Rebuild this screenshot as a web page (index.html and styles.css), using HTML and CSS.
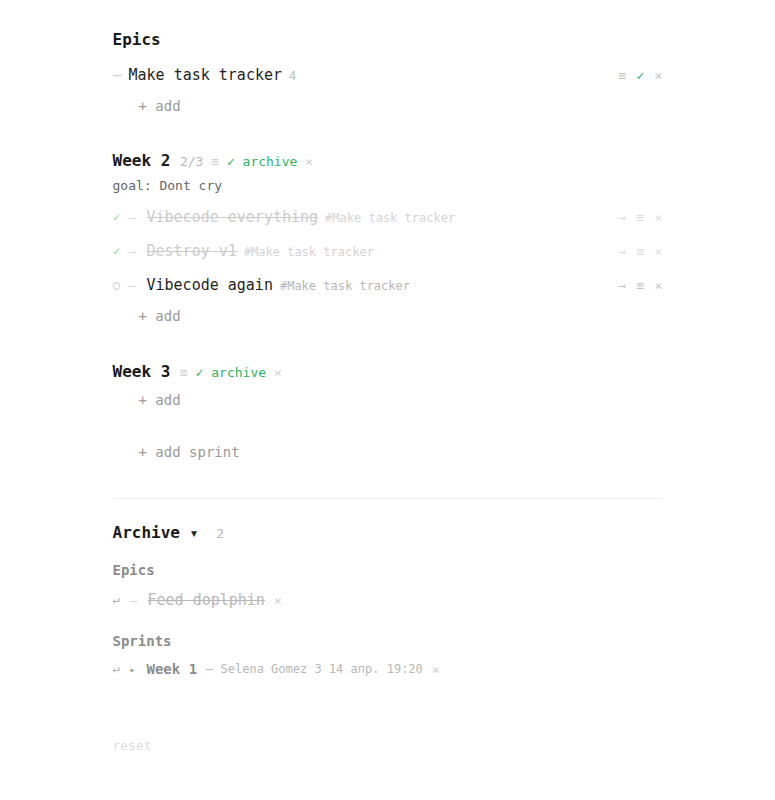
FILE: index.html
```html
<!DOCTYPE html>
<html lang="en">
<head>
<meta charset="utf-8">
<title>Tracker</title>
<link rel="stylesheet" href="styles.css">
</head>
<body>
<div class="page">
  <section class="epics">
    <h2 class="heading">Epics</h2>
    <div class="row epic-row">
      <span class="dash">—</span>
      <span class="title">Make task tracker</span>
      <span class="count">4</span>
      <span class="actions"><span class="act">≡</span><span class="act ok">✓</span><span class="act">×</span></span>
    </div>
    <div class="add">+ add</div>
  </section>

  <section class="sprint">
    <h2 class="heading sprint-head">Week 2 <span class="meta"><span class="frac">2/3</span> <span class="eq">≡</span> <span class="green">✓ archive</span> <span class="x">×</span></span></h2>
    <div class="goal">goal: Dont cry</div>
    <div class="row task done">
      <span class="state green-light">✓</span>
      <span class="tdash">—</span>
      <span class="ttitle">Vibecode everything</span>
      <span class="tag">#Make task tracker</span>
      <span class="actions faint"><span class="act">→</span><span class="act">≡</span><span class="act">×</span></span>
    </div>
    <div class="row task done">
      <span class="state green-light">✓</span>
      <span class="tdash">—</span>
      <span class="ttitle">Destroy v1</span>
      <span class="tag">#Make task tracker</span>
      <span class="actions faint"><span class="act">→</span><span class="act">≡</span><span class="act">×</span></span>
    </div>
    <div class="row task">
      <span class="state">○</span>
      <span class="tdash">—</span>
      <span class="ttitle">Vibecode again</span>
      <span class="tag">#Make task tracker</span>
      <span class="actions"><span class="act">→</span><span class="act">≡</span><span class="act">×</span></span>
    </div>
    <div class="add">+ add</div>
  </section>

  <section class="sprint week3">
    <h2 class="heading sprint-head">Week 3 <span class="meta"><span class="eq">≡</span> <span class="green">✓ archive</span> <span class="x">×</span></span></h2>
    <div class="add add-tight">+ add</div>
    <div class="add add-sprint">+ add sprint</div>
  </section>

  <hr class="sep">

  <section class="archive">
    <h2 class="heading arch-head">Archive <span class="caret">▾</span> <span class="arch-count">2</span></h2>
    <div class="sublabel">Epics</div>
    <div class="row arow">
      <span class="ret">↩</span>
      <span class="tdash">—</span>
      <span class="atitle">Feed doplphin</span>
      <span class="x ax">×</span>
    </div>
    <div class="sublabel sprints-label">Sprints</div>
    <div class="row arow">
      <span class="ret">↩</span>
      <span class="tri">▸</span>
      <span class="wtitle">Week 1</span>
      <span class="wmeta">— Selena Gomez 3 14 апр. 19:20</span>
      <span class="x ax">×</span>
    </div>
  </section>

  <div class="reset">reset</div>
</div>
</body>
</html>
```

FILE: styles.css
```css
* { box-sizing: border-box; }
html, body { margin: 0; padding: 0; background: #fff; }
body {
  font-family: "DejaVu Sans Mono", "Liberation Mono", monospace;
  color: #1a1a1a;
}
.page {
  width: 550px;
  margin: 0 auto;
  padding-top: 29px;
  padding-bottom: 40px;
}
.heading {
  margin: 0;
  font-size: 16px;
  font-weight: bold;
  line-height: 22px;
  height: 22px;
  color: #1a1a1a;
  white-space: nowrap;
}
.row {
  display: flex;
  align-items: center;
  white-space: nowrap;
}
.epic-row {
  height: 34px;
  margin-top: 7px;
}
.dash {
  font-size: 15px;
  color: #d0d0d0;
  width: 9px;
  margin-right: 7px;
  overflow: hidden;
}
.title {
  font-size: 15px;
  color: #1f1f1f;
}
.count {
  font-size: 12px;
  color: #bdbdbd;
  margin-left: 7px;
  padding-top: 1px;
}
.actions {
  margin-left: auto;
  display: flex;
  gap: 10px;
  font-size: 13px;
  color: #c4c4c4;
}
.actions .act { width: 8px; text-align: center; }
.actions .ok { color: #2bb060; }
.actions.faint { color: #dcdcdc; }
.add {
  font-size: 14px;
  color: #9a9a9a;
  height: 28px;
  line-height: 28px;
  padding-left: 26px;
}
.sprint { margin-top: 30px; }
.week3 { margin-top: 31px; }
.meta {
  font-size: 13px;
  font-weight: normal;
}
.frac { color: #b8b8b8; }
.eq { color: #d0d0d0; }
.green { color: #2db55d; }
.x { color: #cfcfcf; }
.goal {
  font-size: 13px;
  line-height: 20px;
  height: 20px;
  margin-top: 4px;
  color: #666;
}
.task {
  height: 34px;
}
.sprint .goal + .task { margin-top: 4px; }
.state {
  font-size: 12px;
  width: 8px;
  color: #c8c8c8;
  margin-right: 8px;
  text-align: center;
}
.green-light { color: #8fd8a6; }
.tdash {
  font-size: 13px;
  color: #d4d4d4;
  width: 8px;
  margin-right: 10px;
  overflow: hidden;
}
.ttitle {
  font-size: 15px;
  color: #1f1f1f;
}
.task.done .ttitle {
  color: #cccccc;
  text-decoration: line-through;
}
.tag {
  font-size: 12px;
  color: #b8b8b8;
  margin-left: 7px;
  padding-top: 1px;
}
.task.done .tag { color: #d4d4d4; }
.add-tight { margin-top: 3px; }
.add-sprint { margin-top: 24px; }
.sep {
  border: 0;
  border-top: 1px solid #f0f0f0;
  margin: 32px 0 0;
  height: 0;
}
.archive { margin-top: 23px; }
.caret {
  font-size: 15px;
  color: #222;
  margin-left: 0;
}
.arch-count {
  font-size: 13px;
  font-weight: normal;
  color: #b8b8b8;
  margin-left: 8px;
}
.sublabel {
  font-size: 14px;
  font-weight: bold;
  color: #8c8c8c;
  line-height: 20px;
  height: 20px;
  margin-top: 16px;
}
.sprints-label { margin-top: 17px; }
.arow {
  height: 28px;
  margin-top: 6px;
}
.sprints-label + .arow { margin-top: 4px; }
.ret {
  font-size: 13px;
  color: #b0b0b0;
  width: 8px;
  margin-right: 9px;
}
.atitle {
  font-size: 15px;
  color: #b8b8b8;
  text-decoration: line-through;
}
.ax {
  font-size: 13px;
  margin-left: 9px;
}
.tri {
  font-size: 10px;
  color: #9a9a9a;
  width: 8px;
  margin-right: 9px;
}
.wtitle {
  font-size: 14px;
  font-weight: bold;
  color: #8c8c8c;
}
.wmeta {
  font-size: 12px;
  color: #b8b8b8;
  margin-left: 9px;
}
.reset {
  font-size: 13px;
  color: #dcdcdc;
  line-height: 20px;
  margin-top: 53px;
}
```
